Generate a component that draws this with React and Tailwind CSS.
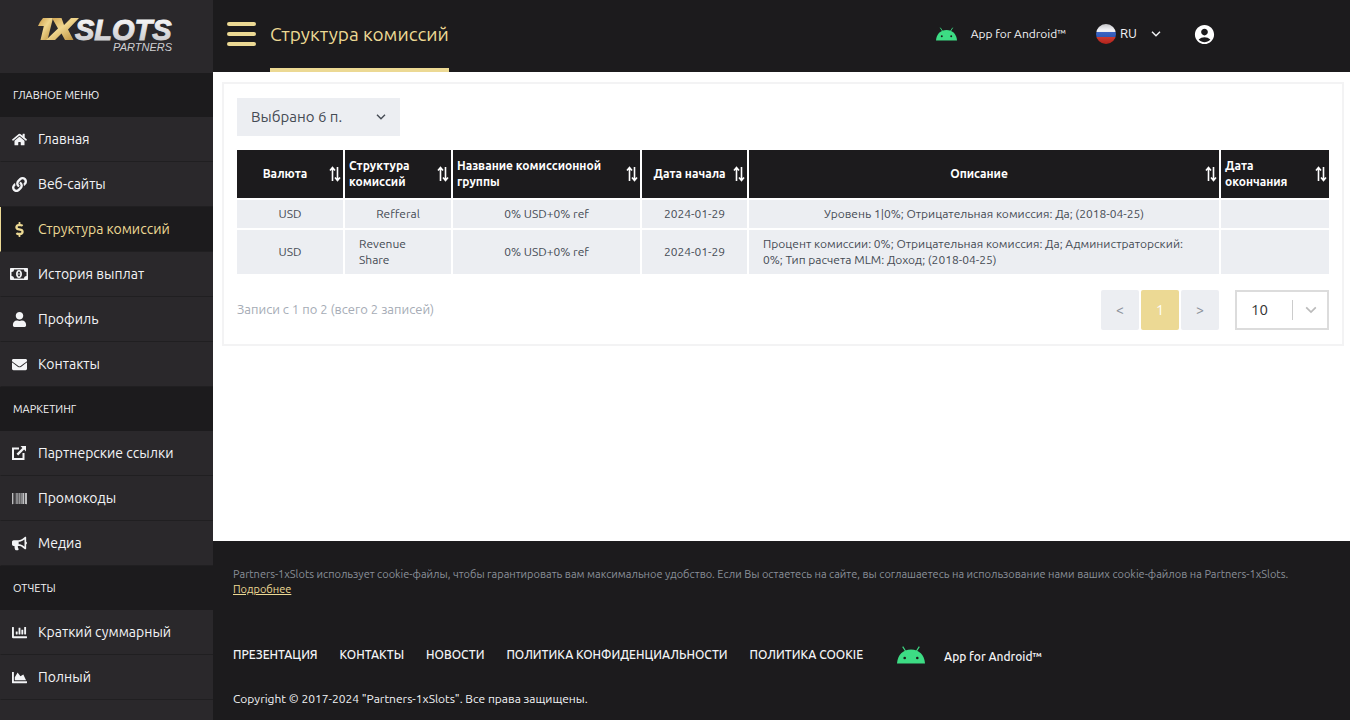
import React from "react";
import {
  FaBarcode,
  FaBullhorn,
  FaChartArea,
  FaChartBar,
  FaDollarSign,
  FaEnvelope,
  FaHome,
  FaLink,
  FaUser,
} from "react-icons/fa";
import { MdAccountCircle } from "react-icons/md";

const MoneyIcon = () => (
  <svg viewBox="0 0 18 12" className="w-[18px] h-3 shrink-0" fill="currentColor">
    <path fillRule="evenodd" d="M.8 0h16.400a.8.8 0 0 1 .8.8v10.400a.8.8 0 0 1-.8.8H.8a.8.8 0 0 1-.8-.8V.8A.8.8 0 0 1 .8 0ZM4 1.500A2.500 2.500 0 0 1 1.500 4v4A2.500 2.500 0 0 1 4 10.500h10A2.500 2.500 0 0 1 16.500 8V4A2.500 2.500 0 0 1 14 1.500H4Z" />
    <path fillRule="evenodd" d="M9 2c1.900 0 3 1.800 3 4s-1.100 4-3 4-3-1.800-3-4 1.100-4 3-4Zm0 1.500c-.8 0-1.200 1-1.200 2.500S8.200 8.500 9 8.500s1.200-1 1.200-2.500S9.800 3.500 9 3.500Z" />
    <path d="M8.600 5h.8v2h-.8z" />
  </svg>
);

const ShareIcon = () => (
  <svg viewBox="0 0 16 16" className="w-4 h-4" fill="currentColor">
    <path d="M1 2.500h7v2H3V13h8.500V8h2v7H1V2.500Z" />
    <path d="M9.500 1H15v5.500l-1.900-1.900-5.900 5.900-1.700-1.700 5.900-5.900L9.500 1Z" />
  </svg>
);

const SortIcon = () => (
  <svg viewBox="0 0 12 16" className="w-3 h-4 shrink-0" fill="none" stroke="currentColor" strokeWidth="1.600">
    <path d="M3.500 15V2M1 4.500 3.500 1.500 6 4.500" />
    <path d="M8.500 1v13M6 11.500l2.500 3 2.500-3" />
  </svg>
);

const Chevron = ({ className }) => (
  <svg viewBox="0 0 10 6" className={className} fill="none" stroke="currentColor" strokeWidth="1.400">
    <path d="M1 .8 5 4.800 9 .8" />
  </svg>
);

const AndroidIcon = ({ className }) => (
  <svg viewBox="0 0 28 18" className={className}>
    <path d="M8.500 5 5.700.6M19.500 5l2.800-4.400" stroke="#3ddc84" strokeWidth="1.200" />
    <path d="M0 17.500C.5 9 6 3.500 14 3.500S27.500 9 28 17.500Z" fill="#3ddc84" />
    <circle cx="7.700" cy="12" r="1.300" fill="#1c1b1d" />
    <circle cx="20.300" cy="12" r="1.300" fill="#1c1b1d" />
  </svg>
);

const FlagRu = () => (
  <svg viewBox="0 0 20 20" className="w-5 h-5">
    <defs>
      <clipPath id="flagClip">
        <circle cx="10" cy="10" r="10" />
      </clipPath>
      <linearGradient id="flagShade" x1="0" y1="0" x2="0" y2="1">
        <stop offset="0" stopColor="#000" stopOpacity=".2" />
        <stop offset=".3" stopColor="#fff" stopOpacity=".15" />
        <stop offset="1" stopColor="#000" stopOpacity=".2" />
      </linearGradient>
    </defs>
    <g clipPath="url(#flagClip)">
      <path d="M0 0h20v8H0z" fill="#f0f0f4" />
      <path d="M0 8h20v5H0z" fill="#1f4fc0" />
      <path d="M0 13h20v7H0z" fill="#dc2a20" />
      <path d="M0 0h20v20H0z" fill="url(#flagShade)" />
    </g>
  </svg>
);

const Logo = () => (
  <svg viewBox="0 -8 144 48" className="w-36 h-12" role="img" aria-label="1XSLOTS Partners">
    <defs>
      <linearGradient id="gold" x1="0" y1="0" x2="1" y2="1">
        <stop offset="0" stopColor="#c99a45" />
        <stop offset=".45" stopColor="#f0d68e" />
        <stop offset="1" stopColor="#b98a35" />
      </linearGradient>
      <linearGradient id="silver" x1="0" y1="0" x2="0" y2="1">
        <stop offset="0" stopColor="#ffffff" />
        <stop offset="1" stopColor="#c4c4c8" />
      </linearGradient>
    </defs>
    <path d="M7 2h10l-5.500 22H4.500L7.800 10H2L4 6Z" fill="url(#gold)" />
    <path d="M16 2h9.500l2.500 7 7-7h8L32 13.500 37.500 24H29l-3.500-6.500L19 24h-9l12-11.500Z" fill="url(#gold)" />
    <text x="39" y="24" fontFamily="Liberation Sans, Arial, sans-serif" fontSize="29" fontWeight="700" fontStyle="italic" fill="url(#silver)" stroke="url(#silver)" strokeWidth="1">
      SLOTS
    </text>
    <text x="136" y="35" textAnchor="end" fontFamily="Liberation Sans, Arial, sans-serif" fontSize="11" fontStyle="italic" fill="#cfcfd2">
      PARTNERS
    </text>
  </svg>
);

const menu = [
  {
    title: "ГЛАВНОЕ МЕНЮ",
    items: [
      { icon: FaHome, label: "Главная" },
      { icon: FaLink, label: "Веб-сайты" },
      { icon: FaDollarSign, label: "Структура комиссий", active: true },
      { icon: MoneyIcon, label: "История выплат" },
      { icon: FaUser, label: "Профиль" },
      { icon: FaEnvelope, label: "Контакты" },
    ],
  },
  {
    title: "МАРКЕТИНГ",
    items: [
      { icon: ShareIcon, label: "Партнерские ссылки" },
      { icon: FaBarcode, label: "Промокоды" },
      { icon: FaBullhorn, label: "Медиа" },
    ],
  },
  {
    title: "ОТЧЕТЫ",
    items: [
      { icon: FaChartBar, label: "Краткий суммарный" },
      { icon: FaChartArea, label: "Полный" },
    ],
  },
];

const columns = [
  { label: "Валюта", width: "w-[107px]" },
  { label: "Структура комиссий", width: "w-[108px]", left: true },
  { label: "Название комиссионной группы", width: "w-[189px]", left: true },
  { label: "Дата начала", width: "w-[107px]" },
  { label: "Описание", width: "w-auto" },
  { label: "Дата окончания", width: "w-[109px]", left: true },
];

const rows = [
  ["USD", "Refferal", "0% USD+0% ref", "2024-01-29", "Уровень 1|0%; Отрицательная комиссия: Да; (2018-04-25)", ""],
  [
    "USD",
    "Revenue Share",
    "0% USD+0% ref",
    "2024-01-29",
    "Процент комиссии: 0%; Отрицательная комиссия: Да; Администраторский: 0%; Тип расчета MLM: Доход; (2018-04-25)",
    "",
  ],
];

const footerLinks = ["ПРЕЗЕНТАЦИЯ", "КОНТАКТЫ", "НОВОСТИ", "ПОЛИТИКА КОНФИДЕНЦИАЛЬНОСТИ", "ПОЛИТИКА COOKIE"];

const Sidebar = () => (
  <aside className="w-[213px] shrink-0 bg-[#2a282b]">
    <a href="#" className="h-[73px] flex items-start pl-9 pt-2">
      <Logo />
    </a>
    <nav>
      {menu.map((group) => (
        <section key={group.title}>
          <h2 className="h-11 flex items-center pl-[13px] bg-[#1c1b1d] text-[11px] text-gray-100">{group.title}</h2>
          {group.items.map((item) => (
            <a
              key={item.label}
              href="#"
              className={`h-[45px] flex items-center gap-[9px] border-b border-b-[#201f21] border-l pl-2 text-sm ${
                item.active
                  ? "bg-[#1c1b1d] border-l-[#ecd994] text-[#ecd994]"
                  : "border-l-transparent text-gray-100"
              }`}
            >
              <span className="w-5 flex justify-center">
                <item.icon size={15} />
              </span>
              {item.label}
            </a>
          ))}
        </section>
      ))}
    </nav>
  </aside>
);

const Header = () => (
  <header className="h-[72px] shrink-0 flex items-center bg-[#1c1b1d] pl-3.5">
    <button type="button" aria-label="Меню" className="flex flex-col gap-1.5 w-[29px] mr-3.5 mb-1">
      <span className="h-1 rounded-full bg-[#ecd994]" />
      <span className="h-1 rounded-full bg-[#ecd994]" />
      <span className="h-1 rounded-full bg-[#ecd994]" />
    </button>
    <h1 className="h-full flex items-center border-b-4 border-[#ecd994] text-[19px] text-[#ecd994]">
      Структура комиссий
    </h1>
    <div className="ml-auto mr-[134px] pb-1 flex items-center text-gray-100">
      <a href="#" className="flex items-center gap-3.5 text-xs">
        <AndroidIcon className="w-[21px] h-3.5" />
        App for Android™
      </a>
      <button type="button" className="ml-[30px] flex items-center gap-1 text-[13px]">
        <FlagRu />
        RU
        <Chevron className="ml-2.5 w-2.5 h-1.5" />
      </button>
      <button type="button" aria-label="Аккаунт" className="ml-8">
        <MdAccountCircle size={23} className="text-white" />
      </button>
    </div>
  </header>
);

const CommissionTable = () => (
  <table className="w-full table-fixed border-collapse text-xs leading-4">
    <thead>
      <tr>
        {columns.map((col) => (
          <th
            key={col.label}
            className={`${col.width} h-[49px] bg-[#1c1b1d] text-white font-bold border-l-2 border-white first:border-l-0 pl-1 pr-0.5`}
          >
            <div className="flex items-center">
              <span className={col.left ? "flex-1 text-left" : "flex-1 text-center whitespace-nowrap"}>
                {col.label}
              </span>
              <SortIcon />
            </div>
          </th>
        ))}
      </tr>
    </thead>
    <tbody className="text-[#454b54]">
      {rows.map((row, i) => (
        <tr key={i} className="border-t-2 border-white">
          {row.map((cell, j) => (
            <td key={j} className="bg-[#eceef2] border-l-2 border-white first:border-l-0 px-3.5 py-1.5">
              <div className="mx-auto w-fit">{cell}</div>
            </td>
          ))}
        </tr>
      ))}
    </tbody>
  </table>
);

const Pager = () => (
  <div className="mt-4 flex items-center">
    <p className="text-[13px] text-[#a5abb5]">Записи с 1 по 2 (всего 2 записей)</p>
    <div className="ml-auto flex gap-0.5 text-sm">
      <button type="button" className="w-[38px] h-10 rounded-xs bg-[#eceef2] text-[#8d939c]">&lt;</button>
      <button type="button" className="w-[38px] h-10 rounded-xs bg-[#ecd994] text-white">1</button>
      <button type="button" className="w-[38px] h-10 rounded-xs bg-[#eceef2] text-[#8d939c]">&gt;</button>
    </div>
    <div className="relative ml-4">
      <select
        aria-label="Записей на странице"
        className="block w-[94px] h-10 appearance-none border-2 border-[#dcdcdc] bg-white pl-3.5 text-[15px] text-[#333]"
      >
        <option>10</option>
      </select>
      <span className="absolute right-3 top-2.5 h-5 flex items-center border-l border-[#ccc] pl-3 pointer-events-none">
        <Chevron className="w-3 h-2 text-[#bbb]" />
      </span>
    </div>
  </div>
);

const Footer = () => (
  <footer className="bg-[#1c1b1d] px-5 pt-[26px] pb-[13px] text-xs text-gray-100">
    <p className="text-[11px] leading-[15px] text-[#8a9099]">
      Partners-1xSlots использует cookie-файлы, чтобы гарантировать вам максимальное удобство. Если Вы остаетесь на
      сайте, вы соглашаетесь на использование нами ваших cookie-файлов на Partners-1xSlots.{" "}
      <a href="#" className="text-[#ecd994] underline">
        Подробнее
      </a>
    </p>
    <div className="mt-[47px] flex items-center h-[22px]">
      <nav className="flex gap-[22px] font-medium whitespace-nowrap">
        {footerLinks.map((link) => (
          <a key={link} href="#">
            {link}
          </a>
        ))}
      </nav>
      <a href="#" className="ml-[34px] mt-1 flex items-center gap-[19px] font-medium">
        <AndroidIcon className="w-7 h-[18px] mb-1" />
        App for Android™
      </a>
    </div>
    <p className="mt-[25px] leading-4">Copyright © 2017-2024 "Partners-1xSlots". Все права защищены.</p>
  </footer>
);

const App = () => {
  return (
    <div className="flex min-h-screen bg-white font-['Ubuntu','Noto_Sans',sans-serif]">
      <Sidebar />
      <div className="flex-1 min-w-0 flex flex-col">
        <Header />
        <main className="flex-1 pt-2.5 pl-[9px] pr-1.5">
          <div className="border-2 border-[#f3f3f4] px-[13px] py-3.5">
            <button
              type="button"
              className="mb-3.5 w-[163px] h-[38px] flex items-center justify-between bg-[#eceef2] px-3.5 text-[15px] text-[#454b54]"
            >
              Выбрано 6 п.
              <Chevron className="w-2.5 h-1.5" />
            </button>
            <CommissionTable />
            <Pager />
          </div>
        </main>
        <Footer />
      </div>
    </div>
  );
};

export default App;
